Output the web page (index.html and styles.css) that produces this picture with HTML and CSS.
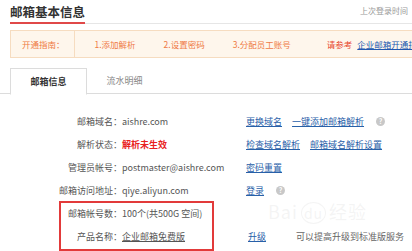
FILE: index.html
```html
<!DOCTYPE html>
<html lang="zh-CN">
<head>
    <meta charset="UTF-8">
    <meta name="viewport" content="width=device-width, initial-scale=1.0">
    <title>邮箱基本信息</title>
    <link rel="stylesheet" href="styles.css">
</head>
<body>

    <div class="page">
        <div class="header">
            <h1 class="title">邮箱基本信息</h1>
            <span class="last-login">上次登录时间</span>
        </div>

        <div class="guide">
            <span class="guide-label">开通指南：</span>
            <span class="step">1.添加解析</span>
            <svg class="chevron" width="12" height="26" viewBox="0 0 12 26"><polyline points="1,1 11,13 1,25" fill="none" stroke="#f3dcc4" stroke-width="1"/></svg>
            <span class="step">2.设置密码</span>
            <svg class="chevron" width="12" height="26" viewBox="0 0 12 26"><polyline points="1,1 11,13 1,25" fill="none" stroke="#f3dcc4" stroke-width="1"/></svg>
            <span class="step">3.分配员工账号</span>
            <span class="refer">请参考</span>
            <a class="guide-link" href="#">企业邮箱开通指南</a>
        </div>

        <div class="tabs">
            <div class="tab active">邮箱信息</div>
            <div class="tab">流水明细</div>
        </div>

        <div class="info">
            <div class="label">邮箱域名：</div>
            <div class="value">aishre.com</div>
            <div class="actions">
                <a href="#">更换域名</a>
                <a href="#">一键添加邮箱解析</a>
                <span class="help">?</span>
            </div>

            <div class="label">解析状态：</div>
            <div class="value warn">解析未生效</div>
            <div class="actions">
                <a href="#">检查域名解析</a>
                <a href="#">邮箱域名解析设置</a>
            </div>

            <div class="label">管理员帐号：</div>
            <div class="value">postmaster@aishre.com</div>
            <div class="actions">
                <a href="#">密码重置</a>
            </div>

            <div class="label">邮箱访问地址：</div>
            <div class="value">qiye.aliyun.com</div>
            <div class="actions">
                <a href="#">登录</a>
                <span class="help">?</span>
            </div>

            <div class="label">邮箱帐号数：</div>
            <div class="value">100个(共500G 空间)</div>
            <div class="actions"></div>

            <div class="label">产品名称：</div>
            <div class="value"><span class="underline">企业邮箱免费版</span></div>
            <div class="actions">
                <a href="#" class="upgrade">升级</a>
                <span class="note">可以提高升级到标准版服务</span>
            </div>

            <div class="highlight"></div>
        </div>

        <div class="watermark">Bai<span class="du">du</span>经验</div>
    </div>

</body>
</html>
```

FILE: styles.css
```css
body {
    margin: 0;
    padding: 0;
    background-color: #fff;
    font-family: "Noto Sans CJK SC", "Noto Sans", sans-serif;
    color: #555;
    overflow: hidden;
}

.page {
    position: relative;
    width: 412px;
    height: 251px;
    overflow: hidden;
}

a {
    color: #2860a8;
    text-decoration: underline;
}

/* header */
.header {
    display: flex;
    justify-content: space-between;
    align-items: flex-end;
    margin-left: 10px;
    height: 23px;
    border-bottom: 1px solid #e6e6e6;
}

.title {
    margin: 0;
    font-size: 12.5px;
    font-weight: bold;
    color: #333;
    line-height: 19px;
    border-bottom: 2px solid #e04848;
    margin-bottom: -1px;
    padding-bottom: 1px;
}

.last-login {
    font-size: 8px;
    color: #999;
    margin-right: 4px;
    margin-bottom: 7px;
}

/* guide banner */
.guide {
    display: flex;
    align-items: center;
    margin: 6px 0 0 10px;
    height: 26px;
    background-color: #fef6ec;
    border: 1px solid #f6dcc0;
    border-right: none;
    font-size: 8.5px;
    color: #ef7a45;
    white-space: nowrap;
}

.guide-label {
    padding: 0 9px 0 11px;
    height: 26px;
    line-height: 26px;
    border-right: 1px solid #f6dcc0;
}

.step {
    margin-left: 20px;
}

.chevron {
    margin-left: 14px;
    margin-right: -4px;
}

.step + .chevron + .step {
    margin-left: 18px;
}

.refer {
    margin-left: 36px;
    color: #e8482e;
}

.guide-link {
    margin-left: 5px;
    color: #2258b0;
}

/* tabs */
.tabs {
    display: flex;
    margin-top: 10px;
    padding-left: 10px;
    height: 25px;
    border-bottom: 1px solid #dcdcdc;
}

.tab {
    width: 75px;
    height: 25px;
    line-height: 26px;
    text-align: center;
    font-size: 9px;
    color: #888;
}

.tab.active {
    border: 1px solid #dcdcdc;
    border-bottom: 1px solid #fff;
    background-color: #fff;
    color: #333;
    font-weight: bold;
}

/* info rows */
.info {
    position: relative;
    display: grid;
    grid-template-columns: 122px 124px 1fr;
    grid-auto-rows: 23px;
    margin-top: 16px;
    font-size: 9px;
}

.label,
.value,
.actions {
    display: flex;
    align-items: center;
    white-space: nowrap;
}

.label {
    justify-content: flex-end;
    color: #555;
}

.value {
    color: #555;
}

.value.warn {
    color: #e8201c;
    font-weight: bold;
}

.underline {
    text-decoration: underline;
}

.actions {
    gap: 10px;
}

.help {
    display: inline-block;
    width: 9px;
    height: 9px;
    line-height: 9px;
    border-radius: 50%;
    background-color: #c8c8c8;
    color: #fff;
    font-size: 7px;
    font-weight: bold;
    text-align: center;
    margin-left: 2px;
}

.upgrade {
    margin-left: 2px;
}

.note {
    margin-left: 20px;
    color: #666;
}

/* red annotation box drawn over the last two rows */
.highlight {
    position: absolute;
    left: 59px;
    top: 91px;
    width: 151px;
    height: 46px;
    border: 2px solid #e23a3a;
    pointer-events: none;
}

/* faint watermark */
.watermark {
    position: absolute;
    left: 268px;
    top: 198px;
    font-size: 18px;
    color: rgba(200, 200, 200, 0.2);
    letter-spacing: 1px;
    pointer-events: none;
}

.watermark .du {
    display: inline-block;
    margin: 0 3px;
    padding: 0 2px;
    border-radius: 50%;
    border: 1px solid rgba(200, 200, 200, 0.2);
    font-size: 14px;
}
```
